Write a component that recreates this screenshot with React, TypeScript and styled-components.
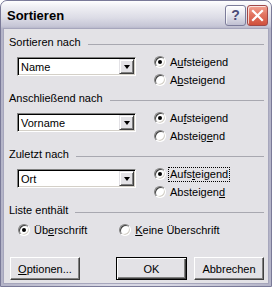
import React from 'react';
import styled, {createGlobalStyle} from 'styled-components';

const GlobalStyle = createGlobalStyle`
  html, body {
    margin: 0;
    padding: 0;
    background: #ffffff;
  }
  body {
    font-family: "Liberation Sans", Arial, sans-serif;
    font-size: 11px;
    color: #000;
  }
`;

const Window = styled.div`
  width: 272px;
  height: 287px;
  box-sizing: border-box;
  display: flex;
  flex-direction: column;
  border: 1px solid #7a7a98;
  border-radius: 7px 7px 0 0;
  background: linear-gradient(90deg, #b4b4c8, #d8d8e4 40%, #d8d8e4 60%, #b4b4c8);
  overflow: hidden;
`;

const TitleBar = styled.div`
  height: 28px;
  display: flex;
  align-items: center;
  padding: 0 3px 0 6px;
  background: linear-gradient(180deg, #ffffff 0%, #f0f0f4 20%, #dcdce6 60%, #c6c6d6 90%, #b0b0c4 100%);
`;

const Title = styled.span`
  flex: 1;
  font-size: 13px;
  font-weight: bold;
  color: #000;
  margin-top: 1px;
`;

const CaptionButton = styled.div<{ $close?: boolean }>`
  width: 21px;
  height: 21px;
  box-sizing: border-box;
  margin-left: 1px;
  border-radius: 3px;
  border: 1px solid ${p => (p.$close ? '#a04848' : '#7c7c9a')};
  background: ${p => (p.$close
    ? 'linear-gradient(180deg, #f2a494 0%, #e27460 45%, #d0503c 100%)'
    : 'linear-gradient(180deg, #ffffff 0%, #e6e6ee 45%, #c0c0d2 100%)')};
  box-shadow: inset 1px 1px 0 rgba(255, 255, 255, 0.7);
  display: flex;
  align-items: center;
  justify-content: center;
  color: #4c4c78;
  font-size: 14px;
  font-weight: bold;
`;

const Client = styled.div`
  flex: 1;
  margin: 0 3px 3px 3px;
  background: #e3e2e6;
  display: flex;
  flex-direction: column;
  padding: 7px 4px 3px 5px;
  box-shadow: 0 0 0 1px #a6a6bc;
`;

const Group = styled.div`
  display: flex;
  flex-direction: column;
  margin-bottom: 3px;
`;

const Header = styled.div`
  display: flex;
  align-items: flex-start;
  height: 13px;
  line-height: 13px;
`;

const HeaderLine = styled.div`
  flex: 1;
  height: 1px;
  margin: 8px 0 0 7px;
  background: #a8a8b0;
`;

const Row = styled.div`
  display: flex;
  align-items: flex-start;
  margin-top: 4px;
  padding-left: 8px;
`;

const Combo = styled.div`
  width: 119px;
  height: 19px;
  margin-top: 4px;
  box-sizing: border-box;
  display: flex;
  align-items: center;
  background: #fff;
  border: 1px solid;
  border-color: #808080 #ffffff #ffffff #808080;
  box-shadow: inset 1px 1px 0 #000, inset -1px -1px 0 #d4d0c8;
  padding: 1px 1px 1px 3px;
`;

const ComboText = styled.span`
  flex: 1;
`;

const DropButton = styled.div`
  width: 15px;
  height: 15px;
  box-sizing: border-box;
  background: #e3e2e6;
  border: 1px solid;
  border-color: #e3e2e6 #404040 #404040 #e3e2e6;
  box-shadow: inset 1px 1px 0 #fff, inset -1px -1px 0 #808080;
  display: flex;
  align-items: center;
  justify-content: center;
`;

const Arrow = styled.div`
  width: 0;
  height: 0;
  border-left: 3.5px solid transparent;
  border-right: 3.5px solid transparent;
  border-top: 4px solid #000;
`;

const Radios = styled.div`
  display: flex;
  flex-direction: column;
  margin-left: 18px;
`;

const RadioItem = styled.div<{ $gap?: number }>`
  display: flex;
  align-items: center;
  height: 18px;
  margin-left: ${p => p.$gap ?? 0}px;
`;

const RadioCircle = styled.div<{ $checked?: boolean }>`
  width: 12px;
  height: 12px;
  box-sizing: border-box;
  border-radius: 50%;
  border: 1px solid;
  border-color: #808080 #ffffff #ffffff #808080;
  box-shadow: inset 1px 1px 0 #404040, inset -1px -1px 0 #d4d0c8;
  background: #fff;
  display: flex;
  align-items: center;
  justify-content: center;
  margin-right: 3px;
  &::after {
    content: '';
    display: ${p => (p.$checked ? 'block' : 'none')};
    width: 4px;
    height: 4px;
    border-radius: 50%;
    background: #000;
  }
`;

const RadioLabel = styled.span<{ $focus?: boolean }>`
  padding: 0 1px;
  outline: ${p => (p.$focus ? '1px dotted #000' : 'none')};
  line-height: 13px;
`;

const Acc = styled.span`
  text-decoration: underline;
`;

const ListRow = styled.div`
  display: flex;
  align-items: center;
  margin-top: 4px;
  padding-left: 9px;
`;

const Footer = styled.div`
  display: flex;
  margin-top: auto;
  padding-left: 1px;
`;

const Button = styled.div<{ $default?: boolean }>`
  width: ${p => (p.$default ? 71 : 70)}px;
  height: 23px;
  box-sizing: border-box;
  display: flex;
  align-items: center;
  justify-content: center;
  background: #e3e2e6;
  border: 1px solid;
  border-color: ${p => (p.$default ? '#000' : '#fff #404040 #404040 #fff')};
  box-shadow: ${p => (p.$default
    ? 'inset 1px 1px 0 #fff, inset -1px -1px 0 #404040, inset -2px -2px 0 #808080'
    : 'inset -1px -1px 0 #808080')};
  &:first-child {
    margin-right: auto;
  }
  & + & {
    margin-left: 7px;
  }
`;

type SortGroup = {
  title: string;
  value: string;
  up: React.ReactNode;
  down: React.ReactNode;
  focus?: boolean;
};

const groups: SortGroup[] = [
  {title: 'Sortieren nach', value: 'Name', up: <>A<Acc>u</Acc>fsteigend</>, down: <>A<Acc>b</Acc>steigend</>},
  {title: 'Anschließend nach', value: 'Vorname', up: <>Au<Acc>f</Acc>steigend</>, down: <>Absteig<Acc>e</Acc>nd</>},
  {title: 'Zuletzt nach', value: 'Ort', up: <>Aufs<Acc>t</Acc>eigend</>, down: <>Absteigen<Acc>d</Acc></>, focus: true},
];

const App = () => {
  return (
    <>
      <GlobalStyle/>
      <Window>
        <TitleBar>
          <Title>Sortieren</Title>
          <CaptionButton>?</CaptionButton>
          <CaptionButton $close>
            <svg width="13" height="13" viewBox="0 0 13 13">
              <path d="M2 2 L11 11 M11 2 L2 11" stroke="#fff" strokeWidth="2.2" strokeLinecap="square"/>
            </svg>
          </CaptionButton>
        </TitleBar>
        <Client>
          {groups.map((g, i) => (
            <Group key={i}>
              <Header>
                <span>{g.title}</span>
                <HeaderLine/>
              </Header>
              <Row>
                <Combo>
                  <ComboText>{g.value}</ComboText>
                  <DropButton><Arrow/></DropButton>
                </Combo>
                <Radios>
                  <RadioItem>
                    <RadioCircle $checked/>
                    <RadioLabel $focus={g.focus}>{g.up}</RadioLabel>
                  </RadioItem>
                  <RadioItem>
                    <RadioCircle/>
                    <RadioLabel>{g.down}</RadioLabel>
                  </RadioItem>
                </Radios>
              </Row>
            </Group>
          ))}
          <Group>
            <Header>
              <span>Liste enthält</span>
              <HeaderLine/>
            </Header>
            <ListRow>
              <RadioItem>
                <RadioCircle $checked/>
                <RadioLabel>Üb<Acc>e</Acc>rschrift</RadioLabel>
              </RadioItem>
              <RadioItem $gap={31}>
                <RadioCircle/>
                <RadioLabel><Acc>K</Acc>eine Überschrift</RadioLabel>
              </RadioItem>
            </ListRow>
          </Group>
          <Footer>
            <Button><Acc>O</Acc>ptionen...</Button>
            <Button $default>OK</Button>
            <Button>Abbrechen</Button>
          </Footer>
        </Client>
      </Window>
    </>
  );
};

export default App;
